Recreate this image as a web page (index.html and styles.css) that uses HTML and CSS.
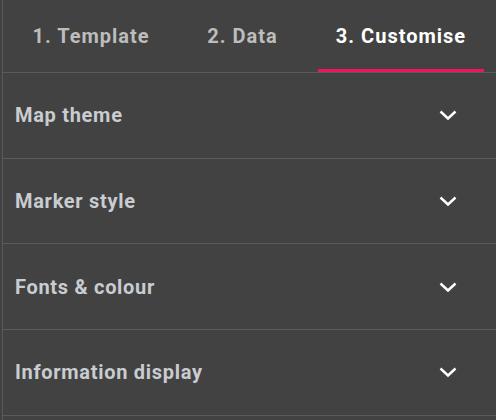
FILE: index.html
```html
<!DOCTYPE html>
<html lang="en">
<head>
    <meta charset="UTF-8">
    <meta name="viewport" content="width=device-width, initial-scale=1.0">
    <title>Customise</title>
    <link rel="stylesheet" href="styles.css">
</head>
<body>
    <div class="panel">
        <div class="tabs">
            <div class="tab">1. Template</div>
            <div class="tab">2. Data</div>
            <div class="tab active">3. Customise</div>
        </div>

        <div class="section">
            <span class="section-title">Map theme</span>
            <svg class="chevron" viewBox="0 0 24 24"><polyline points="4.5,8.5 12,15.5 19.5,8.5"/></svg>
        </div>
        <div class="section">
            <span class="section-title">Marker style</span>
            <svg class="chevron" viewBox="0 0 24 24"><polyline points="4.5,8.5 12,15.5 19.5,8.5"/></svg>
        </div>
        <div class="section">
            <span class="section-title">Fonts &amp; colour</span>
            <svg class="chevron" viewBox="0 0 24 24"><polyline points="4.5,8.5 12,15.5 19.5,8.5"/></svg>
        </div>
        <div class="section">
            <span class="section-title">Information display</span>
            <svg class="chevron" viewBox="0 0 24 24"><polyline points="4.5,8.5 12,15.5 19.5,8.5"/></svg>
        </div>
    </div>
</body>
</html>
```

FILE: styles.css
```css
body {
    margin: 0;
    height: 100vh;
    background-color: #424242;
    font-family: Roboto, "Liberation Sans", sans-serif;
    font-weight: bold;
}

.panel {
    margin-left: 2px;
    min-height: 100vh;
    border-left: 1px solid #5a5a5a;
}

/* Tabs */
.tabs {
    display: grid;
    grid-template-columns: 152px 151px 166px;
    height: 72px;
    padding-left: 12px;
    border-bottom: 1px solid #5a5a5a;
}

.tab {
    display: flex;
    align-items: center;
    justify-content: center;
    font-size: 20px;
    letter-spacing: 1px;
    color: #bdbdbd;
    border-bottom: 3px solid transparent;
    padding-top: 3px;
}

.tab.active {
    color: #ffffff;
    border-bottom-color: #f0145a;
}

/* Accordion rows */
.section {
    display: flex;
    align-items: center;
    justify-content: space-between;
    height: 84.7px;
    padding: 0 36px 0 12px;
    border-bottom: 1px solid #5a5a5a;
}

.section-title {
    font-size: 20px;
    letter-spacing: 0.7px;
    color: #c9ccd0;
}

.chevron {
    width: 24px;
    height: 24px;
    fill: none;
    stroke: #ffffff;
    stroke-width: 2.4;
}
```
